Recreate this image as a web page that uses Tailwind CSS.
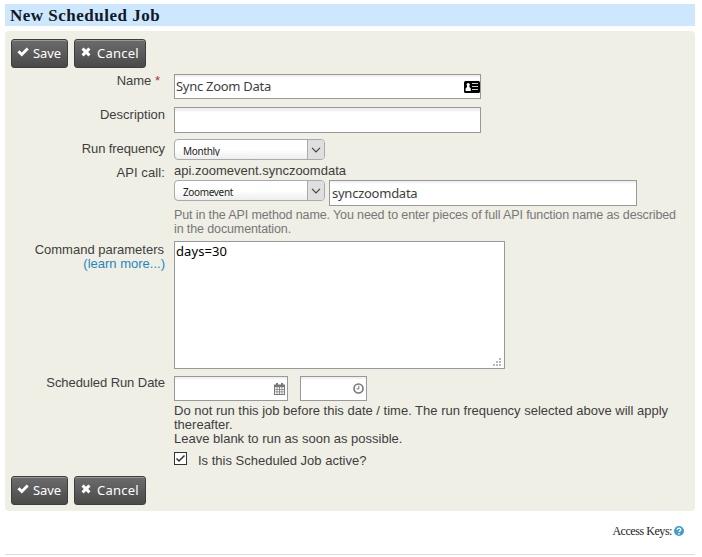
<!DOCTYPE html>
<html lang="en">
<head>
<meta charset="utf-8">
<title>New Scheduled Job</title>
<script src="https://cdn.jsdelivr.net/npm/@tailwindcss/browser@4"></script>
</head>
<body class="bg-white w-[702px] h-[557px] overflow-hidden pt-1 pl-[5px] text-[13px] leading-[14px] text-[#3e3e3e] font-['Liberation_Sans',Arial,sans-serif]">
<svg class="hidden">
  <symbol id="check" viewBox="0 0 12 10"><path d="M0.4 5.2 2.5 3.2 4.8 5.4 9.7 0.5 11.7 2.5 4.8 9.4Z" fill="currentColor"/></symbol>
  <symbol id="times" viewBox="0 0 10 10"><path d="M0.5 2.5 2.6 0.5 5 2.8 7.4 0.5 9.5 2.5 7.2 4.9 9.5 7.3 7.4 9.4 5 7.1 2.6 9.4 0.5 7.3 2.8 4.9Z" fill="currentColor"/></symbol>
  <symbol id="chev" viewBox="0 0 10 6"><path d="M1 0.8 5 4.8 9 0.8" fill="none" stroke="#444" stroke-width="1.2"/></symbol>
</svg>
<h1 class="w-[690px] h-[22px] bg-[#cde8fe] pl-[5px] text-[17px] leading-[23px] font-bold text-[#111827] tracking-[0.5px] whitespace-nowrap font-['Liberation_Serif',serif]"><span>New Scheduled Job</span></h1>
<main class="mt-[5px] w-[690px] h-[480px] rounded-[4px] bg-[#efefe5] pt-2 pl-[6px]">
  <div class="flex gap-[6px] h-[29px] text-white font-['Noto_Sans',sans-serif] [text-shadow:0_1px_0_#000]">
    <button class="flex w-[57px] h-[29px] rounded-[3px] border border-[#3e3e3e] bg-linear-to-b from-[#6c6c6c] to-[#4a4a4a] shadow-[inset_0_1px_0_#999] pl-[5px]"><svg class="w-3 h-[10px] mt-[7px]"><use href="#check"/></svg><span class="ml-1 text-[13px] leading-[27px] tracking-[-0.1px]">Save</span></button>
    <button class="flex w-[72px] h-[29px] rounded-[3px] border border-[#3e3e3e] bg-linear-to-b from-[#6c6c6c] to-[#4a4a4a] shadow-[inset_0_1px_0_#999] pl-[6px]"><svg class="w-[10px] h-[10px] mt-[7px]"><use href="#times"/></svg><span class="ml-[6px] text-[13px] leading-[27px] tracking-[0.25px]">Cancel</span></button>
  </div>
  <div class="flex gap-[9px] mt-[6px] h-[25px]">
    <div class="w-[154px] text-right pr-[5px]"><span>Name</span> <span class="text-[#a33]">*</span></div>
    <div class="flex justify-between w-[307px] border border-[#999] bg-white shadow-[inset_0_3px_2px_-1px_#f0eef2] pl-[1px] font-['Noto_Sans',sans-serif]"><span class="text-[13px] leading-[23px] tracking-[-0.28px]">Sync Zoom Data</span>
      <svg class="w-4 h-3 mt-[6px]" viewBox="0 0 16 12"><rect width="16" height="12" rx="1.5" fill="#000"/><circle cx="4.2" cy="3.5" r="1.6" fill="#fff"/><path d="M3 4.5h2.4v1.5l1.4 1.5v2.5H1.6v-2.5l1.4-1.5Z" fill="#fff"/><path d="M8 2.5h6M8 5.5h6M8 8.5h6" stroke="#ccc" stroke-width="1"/></svg></div>
  </div>
  <div class="flex gap-[9px] mt-2 h-[26px]">
    <div class="w-[154px] text-right pt-[1px]"><span>Description</span></div>
    <div class="w-[307px] border border-[#999] bg-white shadow-[inset_0_4px_2px_-1px_#f0eef2]"></div>
  </div>
  <div class="flex gap-[9px] mt-[6px] h-[21px]">
    <div class="w-[154px] text-right pt-[3px] tracking-[-0.1px]"><span>Run frequency</span></div>
    <div class="flex w-[151px] h-[21px] overflow-hidden rounded-[4px] border border-[#aaa] bg-linear-to-b from-white via-white to-[#eee] pl-2 font-['Noto_Sans',sans-serif]"><div class="w-[124px] h-[16px] overflow-hidden text-[10px] leading-[23px] tracking-[-0.3px] text-[#222]"><span>Monthly</span></div><div class="flex-1 border-l border-[#aaa] bg-[#dfdfdf] pl-[3px] pt-[7px]"><svg class="w-[10px] h-[6px]"><use href="#chev"/></svg></div></div>
  </div>
  <div class="flex gap-[9px] mt-[4px] h-[72px]">
    <div class="w-[154px] text-right pt-[2px] tracking-[0.1px]"><span>API call:</span></div>
    <div class="w-[520px]">
      <div class="h-[16px]"><span>api.zoomevent.synczoomdata</span></div>
      <div class="flex gap-[4px] font-['Noto_Sans',sans-serif]">
        <div class="flex w-[151px] h-[21px] overflow-hidden rounded-[4px] border border-[#aaa] bg-linear-to-b from-white via-white to-[#eee] pl-2"><div class="w-[124px] text-[10px] leading-[23px] tracking-[-0.35px] text-[#222]"><span>Zoomevent</span></div><div class="flex-1 border-l border-[#aaa] bg-[#dfdfdf] pl-[3px] pt-[7px]"><svg class="w-[10px] h-[6px]"><use href="#chev"/></svg></div></div>
        <div class="w-[308px] h-[26px] border border-[#999] bg-white shadow-[inset_0_3px_2px_-1px_#f0eef2] pl-[2px] text-[13px] leading-[24px] tracking-[-0.25px]"><span>synczoomdata</span></div>
      </div>
      <div class="mt-[2px] text-[12.5px] text-[#777] whitespace-nowrap tracking-[-0.12px]"><span>Put in the API method name. You need to enter pieces of full API function name as described</span><br><span>in the documentation.</span></div>
    </div>
  </div>
  <div class="flex gap-[9px] mt-[5px] h-[128px]">
    <div class="w-[154px] text-right pt-[2px]"><span class="mr-[1px]">Command parameters</span><br><a class="text-[#2786c2]">(learn more...)</a></div>
    <div class="flex items-end justify-between w-[331px] border border-[#999] bg-white pl-[1px]"><span class="self-start text-[13px] leading-[18px] text-black tracking-[0.1px] font-['Noto_Sans',sans-serif]">days=30</span>
      <svg class="w-2 h-2 mr-[3px] mb-[2px]" viewBox="0 0 8 8" fill="#b8b8b8"><path d="M6 0h2v2H6zM3 3h2v2H3zM6 3h2v2H6zM0 6h2v2H0zM3 6h2v2H3zM6 6h2v2H6z"/></svg></div>
  </div>
  <div class="flex gap-[9px] mt-[7px] h-[25px]">
    <div class="w-[154px] text-right tracking-[-0.07px]"><span>Scheduled Run Date</span></div>
    <div class="flex gap-3">
      <div class="flex justify-end w-[114px] border border-[#999] bg-white shadow-[inset_0_3px_2px_-1px_#f0eef2] pt-[6px] pr-[2px]"><svg class="w-[11px] h-[12px]" viewBox="0 0 11 12"><path d="M0 1.5h11V12H0Z" fill="#777"/><path d="M2 0h2v3H2zM7 0h2v3H7z" fill="#777"/><path d="M1 4.3h1.7v1.8H1zM3.4 4.3h1.7v1.8H3.4zM5.9 4.3h1.7v1.8H5.9zM8.3 4.3H10v1.8H8.3zM1 6.8h1.7v1.8H1zM3.4 6.8h1.7v1.8H3.4zM5.9 6.8h1.7v1.8H5.9zM8.3 6.8H10v1.8H8.3zM1 9.3h1.7V11H1zM3.4 9.3h1.7V11H3.4zM5.9 9.3h1.7V11H5.9zM8.3 9.3H10V11H8.3z" fill="#fff"/></svg></div>
      <div class="flex justify-end w-[67px] border border-[#999] bg-white shadow-[inset_0_3px_2px_-1px_#f0eef2] pt-[6px] pr-[2px]"><svg class="w-[11px] h-[11px]" viewBox="0 0 11 11" fill="none" stroke="#777"><circle cx="5.5" cy="5.5" r="4.5" stroke-width="1.6"/><path d="M5.8 2.8v3.1H3.5"/></svg></div>
    </div>
  </div>
  <div class="ml-[163px] mt-[3px] whitespace-nowrap"><span>Do not run this job before this date / time. The run frequency selected above will apply</span><br><span>thereafter.</span><br><span>Leave blank to run as soon as possible.</span></div>
  <div class="flex gap-[11px] ml-[163px] mt-[6px] h-[15px]">
    <svg class="w-[13px] h-[13px]" viewBox="0 0 13 13" fill="none" stroke="#333"><rect x=".5" y=".5" width="12" height="12" fill="#fff"/><path d="M2.5 6.5 5 9l5.5-5.5" stroke-width="1.5"/></svg>
    <span class="mt-[2px]">Is this Scheduled Job active?</span>
  </div>
  <div class="flex gap-[6px] h-[29px] mt-[9px] text-white font-['Noto_Sans',sans-serif] [text-shadow:0_1px_0_#000]">
    <button class="flex w-[57px] h-[29px] rounded-[3px] border border-[#3e3e3e] bg-linear-to-b from-[#6c6c6c] to-[#4a4a4a] shadow-[inset_0_1px_0_#999] pl-[5px]"><svg class="w-3 h-[10px] mt-[7px]"><use href="#check"/></svg><span class="ml-1 text-[13px] leading-[27px] tracking-[-0.1px]">Save</span></button>
    <button class="flex w-[72px] h-[29px] rounded-[3px] border border-[#3e3e3e] bg-linear-to-b from-[#6c6c6c] to-[#4a4a4a] shadow-[inset_0_1px_0_#999] pl-[6px]"><svg class="w-[10px] h-[10px] mt-[7px]"><use href="#times"/></svg><span class="ml-[6px] text-[13px] leading-[27px] tracking-[0.25px]">Cancel</span></button>
  </div>
</main>
<footer class="flex justify-end items-start w-[690px] h-[44px] border-b border-[#ddd] pt-[13px] pr-[11px] text-[12px] leading-[14px] text-[#222] font-['Liberation_Serif',serif]"><span class="tracking-[-0.45px]">Access Keys:</span>
  <svg class="w-[10px] h-[10px] ml-[2px] mt-[2px]" viewBox="0 0 10 10"><circle cx="5" cy="5" r="5" fill="#3f9dd2"/><path d="M3.2 3.8C3.2 1.6 6.8 1.7 6.8 3.7 6.8 4.8 5 4.9 5 6.1M5 7v1.4" fill="none" stroke="#fff" stroke-width="1.4"/></svg>
</footer>
</body>
</html>
